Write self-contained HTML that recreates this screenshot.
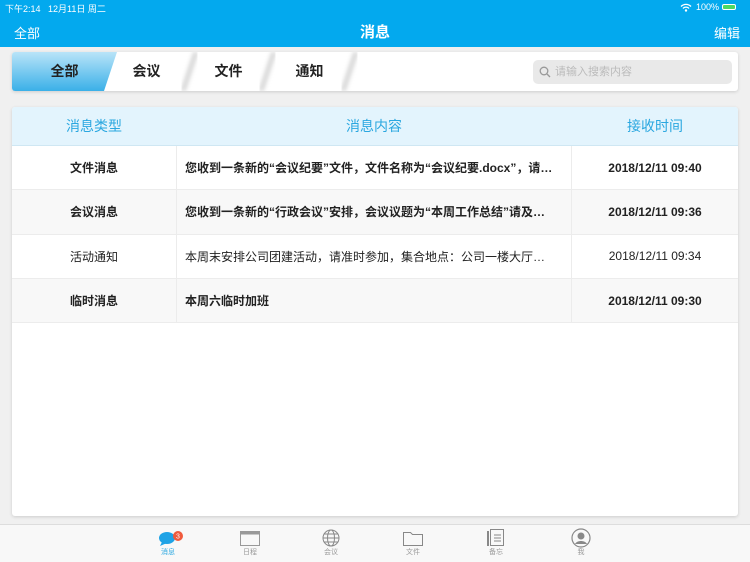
<!DOCTYPE html>
<html><head><meta charset="utf-8"><style>
*{margin:0;padding:0;box-sizing:border-box}
body{width:750px;height:562px;overflow:hidden;background:#f0f0f0;font-family:"Liberation Sans","Noto Sans CJK SC",sans-serif;position:relative}
.nav{position:absolute;left:0;top:0;width:750px;height:47px;background:#03a9ee;color:#fff}
.abs{position:absolute}
.tabs{position:absolute;left:12px;top:52px;width:726px;height:39px;background:#fff;border-radius:3px;box-shadow:0 1px 3px rgba(0,0,0,.15);overflow:hidden}
.tab{position:absolute;top:0;height:39px;line-height:39px;font-size:14px;color:#222;font-weight:bold;text-align:center}
.card{position:absolute;left:12px;top:107px;width:726px;height:409px;background:#fff;border-radius:3px;box-shadow:0 1px 3px rgba(0,0,0,.15);overflow:hidden}
.hd{height:39px;background:#e3f4fd;border-bottom:1px solid #cfe7f3;color:#2aa7e0;font-size:14px;position:relative}
.row{height:44.3px;border-bottom:1px solid #ececec;position:relative;font-size:12px;color:#222}
.row div,.hd div{position:absolute;top:0;height:100%;display:flex;align-items:center}
.c1{left:0;width:164px;justify-content:center}
.c2{left:164px;width:396px;padding-left:8px;border-left:1px solid #ececec;border-right:1px solid #ececec;white-space:nowrap;overflow:hidden}
.c3{left:560px;width:166px;justify-content:center}
.b{font-weight:bold}
.alt{background:#f8f8f8}
.bar{position:absolute;left:0;top:524px;width:750px;height:38px;background:#f8f8f8;border-top:1px solid #ddd}
.ti{position:absolute;top:22px;font-size:7px;color:#999;width:40px;text-align:center}
</style></head><body>
<div class="nav">
<div class="abs" style="left:5px;top:2px;font-size:9px">下午2:14&nbsp;&nbsp;&nbsp;12月11日 周二</div>
<svg class="abs" style="left:680px;top:3px" width="12" height="9"><path d="M1 3.5a7 7 0 0 1 10 0M3 5.5a4 4 0 0 1 6 0" stroke="#fff" stroke-width="1.3" fill="none"/><circle cx="6" cy="7.5" r="1.2" fill="#fff"/></svg>
<div class="abs" style="left:696px;top:2px;font-size:9px">100%</div>
<div class="abs" style="left:722px;top:4px;width:14px;height:6px;border:1px solid #fff;border-radius:2px;background:#4cd964"></div>
<div class="abs" style="left:14px;top:23px;font-size:13px">全部</div>
<div class="abs" style="left:360px;top:21px;font-size:15px;font-weight:bold">消息</div>
<div class="abs" style="left:714px;top:23px;font-size:13px">编辑</div>
</div>
<div class="tabs">
<svg class="abs" style="left:0;top:0" width="360" height="39">
<defs><linearGradient id="g" x1="0" y1="0" x2="0" y2="1"><stop offset="0" stop-color="#b9e4f8"/><stop offset="1" stop-color="#3ab0e8"/></linearGradient>
<filter id="f"><feGaussianBlur stdDeviation="2"/></filter></defs>
<polygon points="0,0 105,0 92,39 0,39" fill="url(#g)"/>
<line x1="184" y1="0" x2="171" y2="39" stroke="#d6d6d6" stroke-width="5" filter="url(#f)"/>
<line x1="262" y1="0" x2="249" y2="39" stroke="#d6d6d6" stroke-width="5" filter="url(#f)"/>
<line x1="344" y1="0" x2="331" y2="39" stroke="#d6d6d6" stroke-width="5" filter="url(#f)"/>
</svg>
<div class="tab" style="left:20px;width:65px">全部</div>
<div class="tab" style="left:102px;width:65px">会议</div>
<div class="tab" style="left:184px;width:65px">文件</div>
<div class="tab" style="left:265px;width:65px">通知</div>
<div class="abs" style="left:521px;top:8px;width:199px;height:24px;background:#e9e9e9;border-radius:5px;font-size:11px;color:#bbb;line-height:24px;padding-left:22px">请输入搜索内容
<svg class="abs" style="left:6px;top:6px" width="12" height="12"><circle cx="5" cy="5" r="3.8" fill="none" stroke="#999" stroke-width="1.3"/><line x1="8" y1="8" x2="11" y2="11" stroke="#999" stroke-width="1.3"/></svg></div>
</div>
<div class="card">
<div class="hd"><div class="c1">消息类型</div><div class="c2" style="justify-content:center;border:none;padding:0">消息内容</div><div class="c3">接收时间</div></div>
<div class="row b"><div class="c1">文件消息</div><div class="c2">您收到一条新的“会议纪要”文件，文件名称为“会议纪要.docx”，请…</div><div class="c3">2018/12/11 09:40</div></div>
<div class="row b alt"><div class="c1">会议消息</div><div class="c2">您收到一条新的“行政会议”安排，会议议题为“本周工作总结”请及…</div><div class="c3">2018/12/11 09:36</div></div>
<div class="row"><div class="c1">活动通知</div><div class="c2">本周末安排公司团建活动，请准时参加，集合地点：公司一楼大厅…</div><div class="c3">2018/12/11 09:34</div></div>
<div class="row b alt"><div class="c1">临时消息</div><div class="c2">本周六临时加班</div><div class="c3">2018/12/11 09:30</div></div>
</div>
<div class="bar">
<svg class="abs" style="left:158px;top:5px" width="28" height="16"><ellipse cx="9" cy="8" rx="8" ry="6" fill="#1fa3e6"/><polygon points="4,12 2,16 9,13" fill="#1fa3e6"/><circle cx="20" cy="6" r="5" fill="#f05a3c"/><text x="20" y="8.5" font-size="7" fill="#fff" text-anchor="middle" font-family="Liberation Sans">3</text></svg>
<div class="ti" style="left:148px;color:#2aa7e0">消息</div>
<svg class="abs" style="left:240px;top:6px" width="20" height="15"><rect x="0.5" y="0.5" width="19" height="14" fill="none" stroke="#999"/><rect x="0.5" y="0.5" width="19" height="3" fill="#999"/></svg>
<div class="ti" style="left:230px">日程</div>
<svg class="abs" style="left:322px;top:4px" width="18" height="18"><circle cx="9" cy="9" r="8" fill="none" stroke="#888"/><ellipse cx="9" cy="9" rx="3.5" ry="8" fill="none" stroke="#888"/><line x1="1" y1="9" x2="17" y2="9" stroke="#888"/><line x1="2" y1="5" x2="16" y2="5" stroke="#888"/><line x1="2" y1="13" x2="16" y2="13" stroke="#888"/></svg>
<div class="ti" style="left:311px">会议</div>
<svg class="abs" style="left:403px;top:5px" width="20" height="16"><path d="M0.5 2.5h7l2 2h10v11h-19z" fill="none" stroke="#888"/></svg>
<div class="ti" style="left:393px">文件</div>
<svg class="abs" style="left:487px;top:4px" width="18" height="18"><rect x="3.5" y="0.5" width="13" height="16" fill="none" stroke="#888"/><line x1="1" y1="2" x2="1" y2="17" stroke="#888" stroke-width="2"/><path d="M7 6h7M7 9h7M7 12h7" stroke="#888"/></svg>
<div class="ti" style="left:476px">备忘</div>
<svg class="abs" style="left:571px;top:3px" width="20" height="20"><circle cx="10" cy="10" r="9" fill="none" stroke="#888" stroke-width="1.2"/><circle cx="10" cy="8" r="3.5" fill="#888"/><path d="M4 16c2-4 10-4 12 0" fill="#888"/></svg>
<div class="ti" style="left:561px">我</div>
</div>
</body></html>
